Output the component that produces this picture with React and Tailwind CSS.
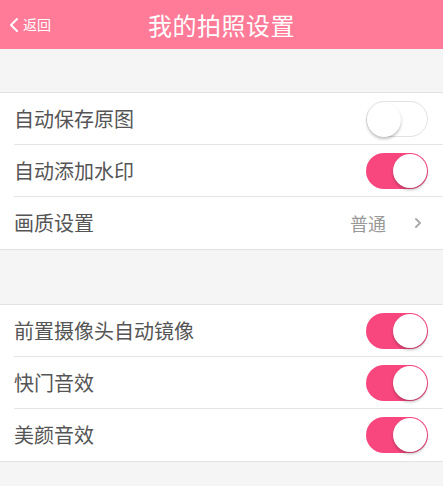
import { ChevronLeft, ChevronRight } from 'lucide-react';

function Toggle({ on }) {
    return (
        <div
            className={`relative w-[62px] h-[36px] rounded-full ${on ? 'bg-[#f8477f]' : 'bg-white border border-[#e2e2e2]'}`}
        >
            <div
                className={`absolute top-[1px] w-[34px] h-[34px] rounded-full bg-white shadow-[0_2px_3px_rgba(0,0,0,0.25)] ${on ? 'right-[1px]' : 'left-0 top-0'}`}
            />
        </div>
    );
}

function Row({ label, last, children }) {
    return (
        <div className="flex items-center h-[52px] pl-[14px]">
            <div className={`flex-1 h-full flex items-center pr-[15px] ${last ? '' : 'border-b border-[#e4e4e4]'}`}>
                <span className="flex-1 text-[20px] text-[#555]">{label}</span>
                {children}
            </div>
        </div>
    );
}

export default function App() {
    return (
        <div className="w-[443px] h-[486px] bg-[#f5f5f5] overflow-hidden" style={{ fontFamily: '"Noto Sans CJK SC", "Liberation Sans", sans-serif' }}>
            {/* Header */}
            <div className="relative h-[49px] bg-[#ff7b98] flex items-center justify-center">
                <div className="absolute left-[2px] top-0 h-full flex items-center text-white">
                    <ChevronLeft className="w-[24px] h-[28px]" strokeWidth={2} />
                    <span className="text-[14px] -ml-[3px]">返回</span>
                </div>
                <span className="text-white text-[24px] tracking-[0.5px]">我的拍照设置</span>
            </div>

            <div className="h-[43px]" />

            <div className="bg-white border-y border-[#e2e2e2]">
                <Row label="自动保存原图"><Toggle on={false} /></Row>
                <Row label="自动添加水印"><Toggle on /></Row>
                <Row label="画质设置" last>
                    <span className="text-[18px] text-[#999] mr-[24px]">普通</span>
                    <ChevronRight className="w-[16px] h-[16px] text-[#aaa] mr-[2px]" strokeWidth={3} />
                </Row>
            </div>

            <div className="h-[54px]" />

            <div className="bg-white border-y border-[#e2e2e2]">
                <Row label="前置摄像头自动镜像"><Toggle on /></Row>
                <Row label="快门音效"><Toggle on /></Row>
                <Row label="美颜音效" last><Toggle on /></Row>
            </div>
        </div>
    );
}
